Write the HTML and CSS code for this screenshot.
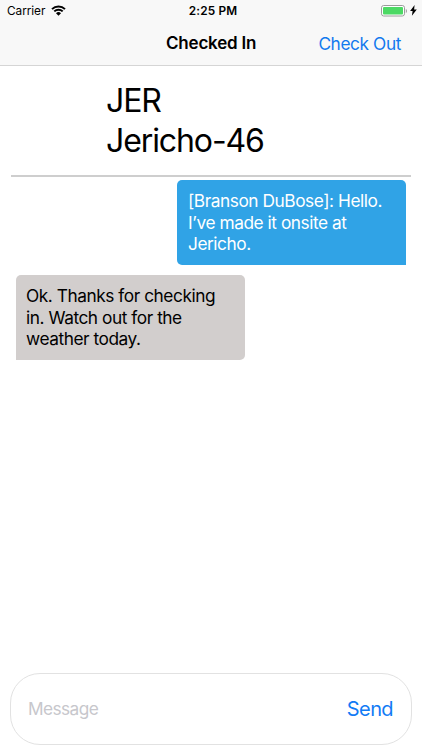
FILE: index.html
```html
<!DOCTYPE html>
<html lang="en">
<head>
    <meta charset="UTF-8">
    <title>Checked In</title>
    <link rel="stylesheet" href="styles.css">
</head>
<body>
<div id="app">
    <header class="header">
        <div class="status">
            <div class="status_left">
                <span class="carrier">Carrier</span>
                <svg class="wifi" width="15" height="11" viewBox="0 0 15 11">
                    <path d="M1 4.1a9.300 9.300 0 0 1 13 0M3.300 6.400a6 6 0 0 1 8.400 0" fill="none" stroke="#000" stroke-width="2"/>
                    <path d="M5 8.200a3.600 3.600 0 0 1 5 0L7.500 10.700z"/>
                </svg>
            </div>
            <span class="time">2:25 PM</span>
            <div class="status_right">
                <svg width="26" height="12" viewBox="0 0 26 12">
                    <rect x=".5" y=".5" width="23" height="10.5" rx="2.2" fill="#fff" stroke="#9b9b9b"/>
                    <rect x="2" y="2" width="20" height="7.5" rx="1" fill="#4cd964"/>
                    <path d="M24.800 4v4c1.500-.7 1.500-3.300 0-4z" fill="#9b9b9b"/>
                </svg>
                <svg class="bolt" width="7" height="11" viewBox="0 0 7 11">
                    <path d="M4.600 0L.1 6.100h2.500L1.900 10.800 6.800 4.500H4.100z"/>
                </svg>
            </div>
        </div>
        <div class="nav">
            <h1>Checked In</h1>
            <a class="check_out">Check Out</a>
        </div>
    </header>

    <div class="site">
        <p>JER</p>
        <p>Jericho-46</p>
    </div>

    <ul class="messages">
        <li class="msg sent">[Branson DuBose]: Hello.<br>I’ve made it onsite at<br>Jericho.</li>
        <li class="msg received">Ok. Thanks for checking<br>in. Watch out for the<br>weather today.</li>
    </ul>

    <div class="composer">
        <span class="placeholder">Message</span>
        <span class="send">Send</span>
    </div>
</div>
</body>
</html>
```
FILE: styles.css
```css
*{
    padding: 0;
    margin: 0;
    list-style: none;
    box-sizing: border-box;
}
body{
    background-color: #fff;
    font-family: Inter, "Liberation Sans", sans-serif;
    color: #000;
}
#app{
    width: 422px;
    height: 750px;
    display: flex;
    flex-direction: column;
    overflow: hidden;
    white-space: nowrap;
}

/* status bar and title */
.header{
    height: 66px;
    background-color: #f8f8f8;
    border-bottom: 1px solid #d5d5d5;
}
.status{
    height: 21px;
    padding: 0 5px 0 7px;
    display: grid;
    grid-template-columns: 1fr auto 1fr;
    align-items: center;
}
.status_left,
.status_right{
    display: flex;
    align-items: center;
}
.status_right{
    justify-content: flex-end;
    gap: 3px;
}
.carrier{
    font-size: 11.800px;
    width: 38px;
    letter-spacing: -.05px;
}
.wifi{
    margin-left: 6px;
}
.time{
    padding-left: 2px;
    font-size: 11.800px;
    font-weight: 600;
    letter-spacing: .2px;
}
.nav{
    height: 44px;
    padding-right: 21px;
    display: grid;
    grid-template-columns: 166px 1fr auto;
    align-items: center;
}
.nav h1{
    grid-column: 2;
    font-size: 17px;
    font-weight: 600;
    letter-spacing: -.2px;
}
.check_out{
    font-size: 17.300px;
    color: #1279ee;
    letter-spacing: -.4px;
}

/* site name */
.site{
    height: 111px;
    margin: 0 11px;
    padding: 15px 0 0 95px;
    border-bottom: 2px solid #cecece;
    font-size: 32px;
    line-height: 40px;
    letter-spacing: -1.100px;
}

/* messages */
.messages{
    flex: 1;
    padding: 3px 16px 0;
    display: flex;
    flex-direction: column;
    gap: 10px;
}
.msg{
    width: 229px;
    height: 85px;
    padding: 10px 10px 0;
    font-size: 17.300px;
    line-height: 21.500px;
    letter-spacing: -.45px;
}
.sent{
    align-self: flex-end;
    padding-left: 11px;
    background-color: #30a3e6;
    color: #fff;
    border-radius: 5px 5px 0 5px;
}
.received{
    background-color: #d2cecd;
    border-radius: 5px 5px 5px 0;
}

/* message input */
.composer{
    height: 72px;
    margin: 0 10px 5px;
    padding: 0 18px 0 17px;
    border: 1px solid #e2e2e2;
    border-radius: 30px;
    display: flex;
    align-items: center;
    justify-content: space-between;
}
.placeholder{
    margin-top: -2px;
    font-size: 17.300px;
    color: #c7c7cc;
    letter-spacing: -.6px;
}
.send{
    font-size: 20px;
    color: #127bf5;
    letter-spacing: -.6px;
}
```
